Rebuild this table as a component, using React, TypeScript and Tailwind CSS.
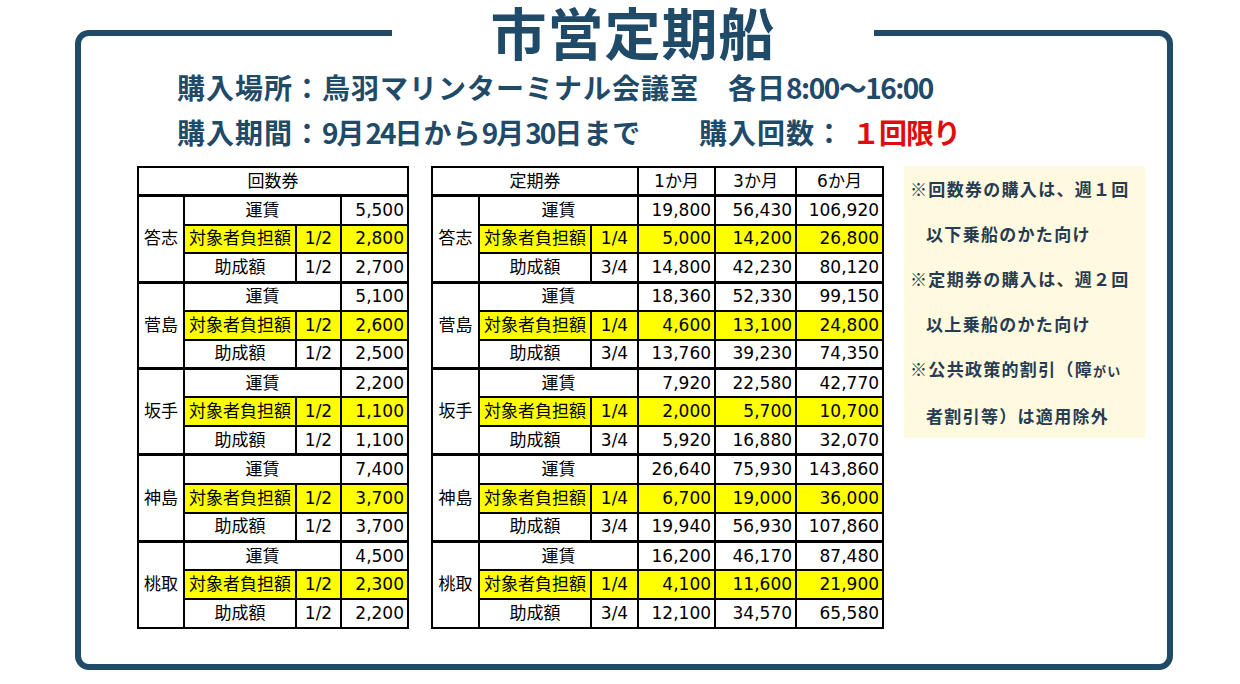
type Group = { name: string; fare: string[]; burden: string[]; subsidy: string[] };

const kaisuken: Group[] = [
  { name: '答志', fare: ['5,500'], burden: ['2,800'], subsidy: ['2,700'] },
  { name: '菅島', fare: ['5,100'], burden: ['2,600'], subsidy: ['2,500'] },
  { name: '坂手', fare: ['2,200'], burden: ['1,100'], subsidy: ['1,100'] },
  { name: '神島', fare: ['7,400'], burden: ['3,700'], subsidy: ['3,700'] },
  { name: '桃取', fare: ['4,500'], burden: ['2,300'], subsidy: ['2,200'] },
];

const teikiken: Group[] = [
  { name: '答志', fare: ['19,800', '56,430', '106,920'], burden: ['5,000', '14,200', '26,800'], subsidy: ['14,800', '42,230', '80,120'] },
  { name: '菅島', fare: ['18,360', '52,330', '99,150'], burden: ['4,600', '13,100', '24,800'], subsidy: ['13,760', '39,230', '74,350'] },
  { name: '坂手', fare: ['7,920', '22,580', '42,770'], burden: ['2,000', '5,700', '10,700'], subsidy: ['5,920', '16,880', '32,070'] },
  { name: '神島', fare: ['26,640', '75,930', '143,860'], burden: ['6,700', '19,000', '36,000'], subsidy: ['19,940', '56,930', '107,860'] },
  { name: '桃取', fare: ['16,200', '46,170', '87,480'], burden: ['4,100', '11,600', '21,900'], subsidy: ['12,100', '34,570', '65,580'] },
];

const cell = 'border-2 border-black p-0 leading-none whitespace-nowrap';
const num = `${cell} text-right pr-[3px]`;
const yellow = 'bg-[#ffff00]';

function FareTable({
  title,
  groups,
  burdenRate,
  subsidyRate,
  months,
  widths,
  tableWidth,
}: {
  title: string;
  groups: Group[];
  burdenRate: string;
  subsidyRate: string;
  months: string[];
  widths: number[];
  tableWidth: string;
}) {
  return (
    <table
      className={`${tableWidth} table-fixed border-collapse border-2 border-black bg-white text-[17px] text-black font-['DejaVu_Sans','Noto_Sans_CJK_JP',sans-serif]`}
    >
      <colgroup>
        {widths.map((w, i) => (
          <col key={i} style={{ width: w }} />
        ))}
      </colgroup>
      <tbody>
        <tr className="h-[28.8px]">
          <td colSpan={months.length ? 3 : 4} className={`${cell} text-center`}>
            {title}
          </td>
          {months.map((m) => (
            <td key={m} className={`${cell} text-center`}>
              {m}
            </td>
          ))}
        </tr>
        {groups.map((g) => (
          <Rows key={g.name} g={g} burdenRate={burdenRate} subsidyRate={subsidyRate} />
        ))}
      </tbody>
    </table>
  );
}

function Rows({ g, burdenRate, subsidyRate }: { g: Group; burdenRate: string; subsidyRate: string }) {
  return (
    <>
      <tr className="h-[28.8px]">
        <td rowSpan={3} className={`${cell} border-t-[3px] text-center`}>
          {g.name}
        </td>
        <td colSpan={2} className={`${cell} border-t-[3px] text-center`}>
          運賃
        </td>
        {g.fare.map((v, i) => (
          <td key={i} className={`${num} border-t-[3px]`}>
            {v}
          </td>
        ))}
      </tr>
      <tr className="h-[28.8px]">
        <td className={`${cell} ${yellow} text-center`}>対象者負担額</td>
        <td className={`${cell} ${yellow} text-center`}>{burdenRate}</td>
        {g.burden.map((v, i) => (
          <td key={i} className={`${num} ${yellow}`}>
            {v}
          </td>
        ))}
      </tr>
      <tr className="h-[28.8px]">
        <td className={`${cell} text-center`}>助成額</td>
        <td className={`${cell} text-center`}>{subsidyRate}</td>
        {g.subsidy.map((v, i) => (
          <td key={i} className={num}>
            {v}
          </td>
        ))}
      </tr>
    </>
  );
}

export default function App() {
  return (
    <div className="w-[1240px] h-[684px] bg-white pl-[75px] font-['Noto_Sans_CJK_JP',sans-serif] text-[#1f4a68]">
      {/* frame top: two line segments with the title between */}
      <div className="flex w-[1098px] h-[64px]">
        <div className="w-[317px] mt-[30px] border-t-[6px] border-l-[6px] border-[#1f4a68] rounded-tl-[14px]" />
        <div className="flex-1 pt-[8px] text-center text-[56px] leading-none font-bold tracking-[1px] font-['Liberation_Sans','Noto_Sans_CJK_JP',sans-serif]">
          市営定期船
        </div>
        <div className="w-[299px] mt-[30px] border-t-[6px] border-r-[6px] border-[#1f4a68] rounded-tr-[14px]" />
      </div>

      <div className="w-[1098px] h-[606px] border-x-[6px] border-b-[6px] border-[#1f4a68] rounded-b-[14px]">
        <div className="pl-[96px] pt-[1px] text-[28px] leading-[45px] font-bold tracking-[1px]">
          <div>
            購入場所：鳥羽マリンターミナル会議室　各日<span className="tracking-[-1.5px]">8:00～16:00</span>
          </div>
          <div className="flex">
            <span className="w-[522px]">
              購入期間：<span className="tracking-[-2px]">9</span>月<span className="tracking-[-2px]">24</span>日から
              <span className="tracking-[-2px]">9</span>月<span className="tracking-[-2px]">30</span>日まで
            </span>
            <span>購入回数：</span>
            <span className="ml-[8px] tracking-[-1px] text-[#e00b0b]">１回限り</span>
          </div>
        </div>

        <div className="flex items-start pl-[56px] mt-[11px]">
          <FareTable
            title="回数券"
            groups={kaisuken}
            burdenRate="1/2"
            subsidyRate="1/2"
            months={[]}
            widths={[46, 112, 45, 67]}
            tableWidth="w-[270px]"
          />
          <div className="ml-[22px]">
            <FareTable
              title="定期券"
              groups={teikiken}
              burdenRate="1/4"
              subsidyRate="3/4"
              months={['1か月', '3か月', '6か月']}
              widths={[47, 112, 47, 77, 81, 87]}
              tableWidth="w-[450px]"
            />
          </div>
          <div className="ml-[20px] w-[241px] bg-[#fff9e0] pl-[6px] text-[17px] leading-[45px] font-bold tracking-[1.3px] text-[#263c52]">
            <div>※回数券の購入は、週１回</div>
            <div className="pl-[16px]">以下乗船のかた向け</div>
            <div>※定期券の購入は、週２回</div>
            <div className="pl-[16px]">以上乗船のかた向け</div>
            <div>
              ※公共政策的割引（障<span className="text-[13px]">がい</span>
            </div>
            <div className="pl-[16px]">者割引等）は適用除外</div>
          </div>
        </div>
      </div>
    </div>
  );
}
